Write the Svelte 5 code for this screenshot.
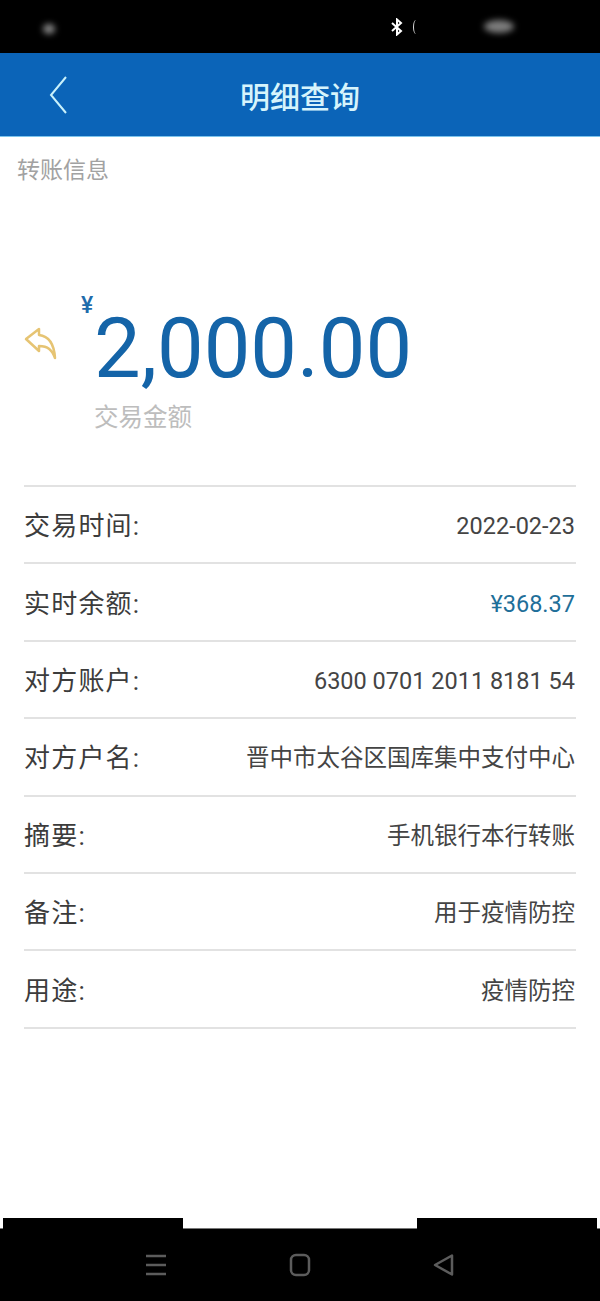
<script>
	const rows = [
		{ label: '交易时间:', value: '2022-02-23' },
		{ label: '实时余额:', value: '¥368.37', money: true },
		{ label: '对方账户:', value: '6300 0701 2011 8181 54' },
		{ label: '对方户名:', value: '晋中市太谷区国库集中支付中心' },
		{ label: '摘要:', value: '手机银行本行转账' },
		{ label: '备注:', value: '用于疫情防控' },
		{ label: '用途:', value: '疫情防控' }
	];
</script>

<main>
	<header class="status">
		<span class="smudge left"></span>
		<svg class="bt" viewBox="0 0 14 18" width="14" height="18">
			<path d="M2 5l9 8-4 3.500V1.500l4 3.500-9 8" fill="none" stroke="#fff" stroke-width="2" />
		</svg>
		<span class="arc"></span>
		<span class="smudge right"></span>
	</header>

	<nav class="nav">
		<svg class="back" viewBox="0 0 20 40" width="20" height="40">
			<path d="M18 2L3 20l15 18" fill="none" stroke="#c9f1fb" stroke-width="2" />
		</svg>
		<h1>明细查询</h1>
	</nav>

	<section class="content">
		<p class="section-title">转账信息</p>

		<div class="amount">
			<svg class="undo" viewBox="0 0 34 34" width="34" height="34">
				<path
					d="M2 12L15 2v6c9 1 15 7 16 23-3-8-7-12-16-12v5z"
					fill="none"
					stroke="#e6c473"
					stroke-width="2.500"
					stroke-linejoin="round"
				/>
			</svg>
			<div class="figures">
				<span class="yen">¥</span>
				<div class="sum">2,000.00</div>
				<div class="caption">交易金额</div>
			</div>
		</div>

		<ul class="rows">
			{#each rows as row}
				<li>
					<span class="label">{row.label}</span>
					<span class="value" class:money={row.money}>{row.value}</span>
				</li>
			{/each}
		</ul>
	</section>

	<footer class="softkeys">
		<span class="tab tab-left"></span>
		<span class="tab tab-right"></span>
		<svg viewBox="0 0 22 24" width="22" height="24">
			<path d="M1 3h20M1 12h20M1 21h20" stroke="#5c5c5c" stroke-width="2.500" fill="none" />
		</svg>
		<svg viewBox="0 0 22 24" width="22" height="24">
			<rect x="2" y="2" width="18" height="20" rx="5" stroke="#5c5c5c" stroke-width="2.500" fill="none" />
		</svg>
		<svg viewBox="0 0 22 24" width="22" height="24">
			<path d="M2 12L19 2.500v19z" stroke="#5c5c5c" stroke-width="2.500" stroke-linejoin="round" fill="none" />
		</svg>
	</footer>
</main>

<style>
	:global(body) {
		margin: 0;
		background: #fff;
	}

	main {
		display: flex;
		flex-direction: column;
		height: 1301px;
		font-family: 'Roboto', 'Noto Sans CJK SC', sans-serif;
		overflow: hidden;
	}

	.status {
		position: relative;
		flex: 0 0 53px;
		background: #000;
		display: flex;
		align-items: center;
		padding: 0 0 0 390px;
		box-sizing: border-box;
		gap: 9px;
	}

	.arc {
		width: 5px;
		height: 14px;
		border-left: 1.500px solid #ddd;
		border-radius: 50%;
	}

	.smudge {
		position: absolute;
		border-radius: 50%;
		filter: blur(3px);
		background: #8a8a8a;
	}

	.smudge.left {
		left: 43px;
		top: 24px;
		width: 12px;
		height: 10px;
	}

	.smudge.right {
		left: 484px;
		top: 20px;
		width: 30px;
		height: 13px;
		background: #7d7d7d;
	}

	.nav {
		position: relative;
		flex: 0 0 84px;
		background: #0b64b8;
		border-bottom: 1px solid #7cc4ec;
		box-sizing: border-box;
		display: flex;
		align-items: center;
		justify-content: center;
	}

	.back {
		position: absolute;
		left: 48px;
		top: 22px;
	}

	h1 {
		margin: 0;
		font-size: 30px;
		font-weight: 500;
		color: #d6f4fc;
	}

	.content {
		flex: 1;
		display: flex;
		flex-direction: column;
	}

	.section-title {
		margin: 20px 0 0 17px;
		font-size: 23px;
		line-height: 28px;
		color: #a2a2a2;
	}

	.amount {
		margin: 119px 0 0 24px;
		display: flex;
		align-items: flex-start;
	}

	.undo {
		margin-top: 23px;
		flex: none;
	}

	.figures {
		position: relative;
		margin-left: 36px;
	}

	.yen {
		position: absolute;
		left: -13px;
		top: -10px;
		font-size: 23px;
		font-weight: 500;
		line-height: 24px;
		color: #1f6cab;
	}

	.sum {
		font-size: 83px;
		line-height: 90px;
		color: #1464a8;
	}

	.caption {
		margin-top: 9px;
		font-size: 24.500px;
		line-height: 30px;
		color: #bdbdbd;
	}

	.rows {
		list-style: none;
		margin: 52px 24px 0 24px;
		padding: 0;
		border-top: 2px solid #e2e2e2;
	}

	.rows li {
		height: 77.400px;
		box-sizing: border-box;
		padding: 3px 1px 0 0;
		border-bottom: 2px solid #e2e2e2;
		display: flex;
		align-items: center;
		justify-content: space-between;
	}

	.label {
		font-size: 26px;
		line-height: 30px;
		letter-spacing: 1.200px;
		color: #3c3c3c;
	}

	.value {
		font-size: 23.500px;
		line-height: 30px;
		color: #444;
	}

	.value.money {
		color: #1f6f99;
	}

	.softkeys {
		position: relative;
		flex: 0 0 73px;
		background: #000;
		border-top: 1px solid #777;
		display: grid;
		grid-template-columns: repeat(3, 144px);
		justify-content: center;
		justify-items: center;
		align-items: center;
		box-sizing: border-box;
	}

	.tab {
		position: absolute;
		top: -11px;
		width: 180px;
		height: 12px;
		background: #000;
	}

	.tab-left {
		left: 3px;
	}

	.tab-right {
		right: 3px;
	}
</style>
